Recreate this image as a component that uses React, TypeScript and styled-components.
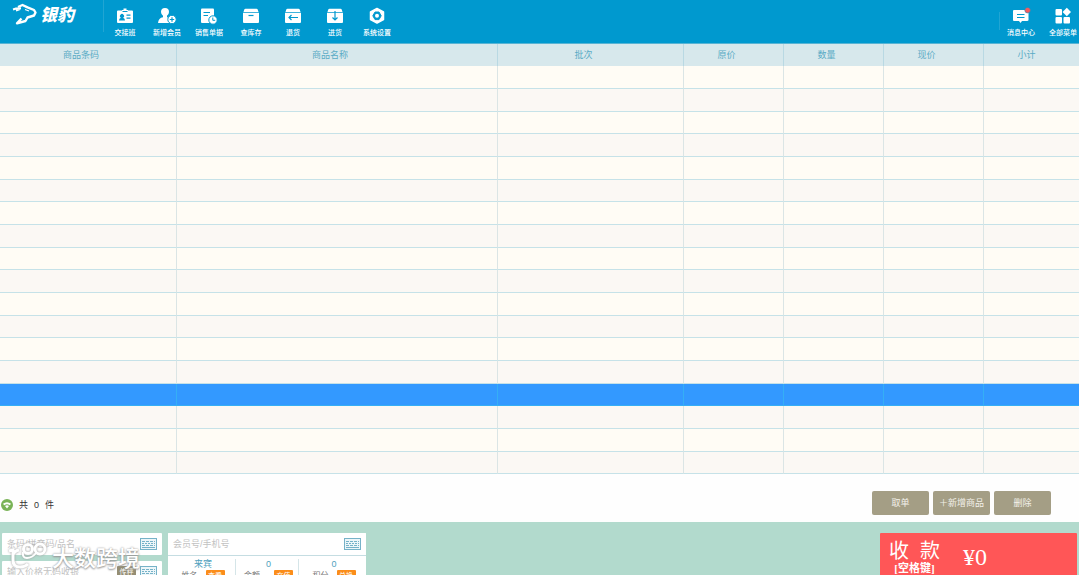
import React from "react";
import styled, { createGlobalStyle, css } from "styled-components";

const GlobalStyle = createGlobalStyle`
  *, *::before, *::after { box-sizing: border-box; }
  body {
    margin: 0;
    background: #fefefe;
    font-family: "Liberation Sans", "Noto Sans CJK SC", sans-serif;
    font-size: 9px;
  }
  button, input { font: inherit; }
`;

const Page = styled.div`
  position: relative;
  display: flex;
  flex-direction: column;
  height: 100vh;
  overflow: hidden;
`;

/* ---------- top bar ---------- */

const TopBar = styled.header`
  display: flex;
  flex: none;
  align-items: flex-start;
  height: 44px;
  background: #0099cf;
  border-bottom: 1px solid #58b4d4;
  color: #fff;
`;

const Brand = styled.a`
  display: flex;
  flex: none;
  gap: 3px;
  width: 103px;
  padding: 3px 0 0 12px;
  color: #fff;
  text-decoration: none;
`;

const BrandName = styled.span`
  font: italic 900 17px/22px "Noto Sans CJK SC", sans-serif;
`;

const Divider = styled.span`
  flex: none;
  width: 1px;
  height: 32px;
  background: #21a5d3;
`;

const Tools = styled.nav<{ $end?: boolean }>`
  display: flex;
  ${(p) =>
    p.$end &&
    css`
      margin-left: auto;
      margin-right: -5px;
    `}
`;

const Tool = styled.button`
  display: flex;
  flex: none;
  flex-direction: column;
  align-items: center;
  gap: 2px;
  width: 42px;
  padding: 7px 0 0;
  border: 0;
  background: none;
  color: #fff;
  font: 500 7px/10px "Noto Sans CJK SC", sans-serif;
  white-space: nowrap;
`;

const EndDivider = styled(Divider)`
  height: 18px;
  margin-top: 12px;
`;

const blue = "#0099cf";

const ShiftIcon = () => (
  <svg width="18" height="18" viewBox="0 0 18 18">
    <path fill="#fff" d="M2 3.500h4V3h1.500V1.500h3V3H12v.5h4q1 0 1 1V15q0 1-1 1H2q-1 0-1-1V4.500q0-1 1-1z" />
    <path fill={blue} d="M6.500 4h5v1h-5zM10.500 7.500h4v1.200h-4zM10.500 10.500h4v1.200h-4zM3 13.500q0-2.200 2-2.700a2 2 0 1 1 2 0q2 .5 2 2.700z" />
  </svg>
);

const MemberIcon = () => (
  <svg width="20" height="18" viewBox="0 0 20 18">
    <path fill="#fff" d="M8 1a4 4 0 0 1 4 4q0 2.300-2 3.800v1.500q4 .7 5 5.700H1q.5-5 5-5.700V8.800Q4 7.300 4 5a4 4 0 0 1 4-4z" />
    <circle cx="15" cy="12.500" r="4.200" fill="#fff" stroke={blue} />
    <path stroke={blue} strokeWidth="1.200" d="M12.800 12.500h4.400M15 10.300v4.400" />
  </svg>
);

const BillIcon = () => (
  <svg width="18" height="18" viewBox="0 0 18 18">
    <path fill="#fff" d="M2 1.500h11q1 0 1 1V16H2q-1 0-1-1V2.500q0-1 1-1z" />
    <path stroke={blue} d="M3.500 5.500h6.500M3.500 8.500h4.500" />
    <circle cx="13" cy="13" r="4.200" fill="#fff" stroke={blue} />
    <path fill="none" stroke={blue} d="M12.800 10.500v2.800h2.400" />
  </svg>
);

const BoxIcon = ({ kind }: { kind: "stock" | "back" | "in" }) => (
  <svg width="18" height="18" viewBox="0 0 18 18">
    <path fill="#fff" d="M3.500 1.800h11q1 0 1.300 1L16.500 5h-15L2.200 2.800q.3-1 1.300-1zM1 5.700h16V15q0 1-1 1H2q-1 0-1-1z" />
    <path
      fill="none"
      stroke={blue}
      strokeWidth="1.200"
      d={
        kind === "stock"
          ? "M6.500 8.500h5"
          : kind === "back"
            ? "M14 10.500H5M7.500 8L5 10.500L7.500 13"
            : "M9 4v9M6.500 10.500L9 13l2.500-2.500"
      }
    />
  </svg>
);

const SettingsIcon = () => (
  <svg width="18" height="18" viewBox="0 0 18 18">
    <path fill="#fff" stroke="#fff" strokeWidth="1.500" strokeLinejoin="round" d="M9 1.500l6.500 3.500v7.600L9 16.100l-6.500-3.500V5z" />
    <path fill={blue} stroke={blue} strokeLinejoin="round" d="M7 5h4l2.200 3.800L11 12.600H7L4.800 8.800z" />
    <circle cx="9" cy="8.800" r="2" fill="#fff" />
  </svg>
);

const MessageIcon = () => (
  <svg width="20" height="18" viewBox="0 0 20 18">
    <path fill="#fff" d="M3 3h13q1.500 0 1.500 1.500v8.500q0 1-1.500 1h-5L9.500 16L8 14H3q-1 0-1-1V4q0-1 1-1z" />
    <path stroke={blue} d="M6 7.500h7.500M6 10.500h7.500" />
    <circle cx="16.600" cy="3.200" r="2.800" fill="#f45b5f" stroke={blue} strokeWidth=".5" />
  </svg>
);

const MenuIcon = () => (
  <svg width="18" height="18" viewBox="0 0 18 18" fill="#fff">
    <rect x="1.500" y="2" width="6.500" height="6.500" rx="1" />
    <rect x="1.500" y="10" width="6.500" height="6.500" rx="1" />
    <rect x="9.500" y="10" width="6.500" height="6.500" rx="1" />
    <path d="M12.800 .8L17 5l-4.200 4.200L8.600 5z" />
  </svg>
);

/* ---------- goods table ---------- */

const Goods = styled.table`
  flex: none;
  width: 100%;
  border-collapse: separate;
  border-spacing: 0;
  table-layout: fixed;
`;

const HeadCell = styled.th<{ $width?: number }>`
  width: ${(p) => (p.$width ? `${p.$width}px` : "auto")};
  height: 22px;
  padding: 0 14px 0 0;
  background: #d7e8ec;
  border-right: 1px solid #b9d9e3;
  color: #59abc5;
  font-weight: 400;
  line-height: 12px;

  &:last-child {
    padding-right: 10px;
    border-right: 0;
  }
`;

const Cell = styled.td`
  padding: 0;
  border-right: 1px solid #dbe5e5;
  border-bottom: 1px solid #c6e2e8;

  &:last-child {
    border-right: 0;
  }
`;

const Row = styled.tr<{ $selected?: boolean }>`
  height: 23px;
  background: #fffcf5;

  &:nth-child(even) {
    background: #fbf8f4;
  }

  &:nth-child(3n + 3) {
    height: 22px;
  }

  ${(p) =>
    p.$selected &&
    css`
      &:nth-child(n) {
        background: #3399ff;
      }
      ${Cell} {
        border-color: #35aff5;
      }
    `}
`;

/* ---------- summary strip ---------- */

const Summary = styled.section`
  display: flex;
  flex: none;
  align-items: center;
  height: 48px;
  padding: 10px 28px 0 1px;
`;

const Count = styled.p`
  display: flex;
  align-items: center;
  gap: 6px;
  margin: 0;
  padding-top: 4px;
  color: #333;
  line-height: 14px;
`;

const Actions = styled.div`
  display: flex;
  gap: 4px;
  margin-left: auto;
`;

const Action = styled.button`
  width: 57px;
  height: 24px;
  padding: 0;
  border: 0;
  border-radius: 2px;
  background: #a49e85;
  color: #f3f1ea;
  line-height: 12px;
  white-space: nowrap;
`;

/* ---------- checkout ---------- */

const Checkout = styled.main`
  display: flex;
  flex: 1 0 auto;
  align-items: flex-start;
  gap: 6px;
  height: 160px;
  padding: 11px 2px 0;
  background: #b2dacd;
`;

const Entry = styled.div`
  display: flex;
  flex: none;
  flex-direction: column;
  gap: 6px;
  width: 160px;
`;

const Field = styled.label`
  display: flex;
  align-items: center;
  gap: 4px;
  height: 22px;
  padding: 0 5px;
  border-radius: 1px;
  background: #fff;
`;

const Input = styled.input`
  flex: 1;
  min-width: 0;
  height: 20px;
  padding: 0;
  border: 0;
  outline: 0;
  background: none;
  color: #555;

  &::placeholder {
    color: #c2c2c2;
    opacity: 1;
  }
`;

const SmallButton = styled.button<{ $accent?: boolean }>`
  flex: none;
  width: 19px;
  height: 12px;
  padding: 0;
  border: 0;
  border-radius: 1px;
  background: ${(p) => (p.$accent ? "#fb8d1a" : "#958e74")};
  color: #fff;
  font-size: 7px;
  line-height: 12px;
`;

const Member = styled.section`
  flex: none;
  width: 198px;
  border-radius: 1px;
  background: #fff;
`;

const Facts = styled.div`
  display: grid;
  grid-template-columns: 67px 63px 1fr;
  border-top: 1px solid #c5dde2;
`;

const Fact = styled.div`
  height: 50px;
  margin-top: 3px;
  padding-left: 3px;
  border-left: 1px solid #d5e5e8;
  text-align: center;
  line-height: 11px;

  &:first-child {
    border-left: 0;
  }
`;

const FactValue = styled.div`
  color: #4f9fbd;
`;

const FactLabel = styled.div<{ $wide?: boolean }>`
  display: flex;
  justify-content: center;
  gap: ${(p) => (p.$wide ? 14 : 8)}px;
  color: #777;
  font-size: 8px;
`;

const Pay = styled.button`
  display: flex;
  align-items: flex-start;
  gap: 23px;
  width: 197px;
  height: 100px;
  margin-left: auto;
  padding: 7px 9px 0;
  border: 0;
  border-radius: 1px;
  background: #ff5657;
  color: #fff;
  font-family: "Liberation Serif", "Noto Sans CJK SC", serif;
`;

const PayText = styled.span`
  display: flex;
  flex-direction: column;
  align-items: center;
  font-size: 20px;
  line-height: 23px;
`;

const PayTitle = styled.span`
  display: flex;
  gap: 11px;
`;

const PayKey = styled.span`
  font-weight: 700;
  font-size: 11px;
  line-height: 10px;
`;

const PayAmount = styled.span`
  padding-top: 5px;
  font-size: 24px;
  line-height: 24px;
`;

/* ---------- watermark ---------- */

const Watermark = styled.div`
  position: absolute;
  left: 8px;
  bottom: 5px;
  display: flex;
  align-items: center;
  gap: 4px;
  color: #fff;
  font: 500 22px/28px "Noto Sans CJK SC", sans-serif;
  text-shadow: 0 0 2px #999, 0 1px 2px #999;
  pointer-events: none;

  svg {
    filter: drop-shadow(0 0 1px #999);
  }
`;

const Keyboard = () => (
  <svg width="17" height="12" viewBox="0 0 17 12" fill="none" stroke="#76b2c8">
    <rect x=".5" y=".5" width="16" height="11" fill="#edf6f9" />
    <path strokeDasharray="3 1" d="M2 3.500h13" />
    <path strokeDasharray="2 1" d="M2 5.500h13" />
    <path strokeDasharray="3 1" d="M2 7.500h13" />
    <path d="M2 9.500h13" />
  </svg>
);

const columns: { title: string; width?: number }[] = [
  { title: "商品条码", width: 177 },
  { title: "商品名称" },
  { title: "批次", width: 186 },
  { title: "原价", width: 100 },
  { title: "数量", width: 100 },
  { title: "现价", width: 100 },
  { title: "小计", width: 95 },
];

const tools = [
  { label: "交接班", icon: <ShiftIcon /> },
  { label: "新增会员", icon: <MemberIcon /> },
  { label: "销售单据", icon: <BillIcon /> },
  { label: "查库存", icon: <BoxIcon kind="stock" /> },
  { label: "退货", icon: <BoxIcon kind="back" /> },
  { label: "进货", icon: <BoxIcon kind="in" /> },
  { label: "系统设置", icon: <SettingsIcon /> },
];

const facts = [
  { value: "来宾", label: "姓名", action: "查看" },
  { value: "0", label: "余额", action: "充值", wide: true },
  { value: "0", label: "积分", action: "兑换" },
];

const ROWS = 18;
const SELECTED = 14;

export default function App() {
  return (
    <Page lang="zh-CN">
      <GlobalStyle />
      <TopBar>
        <Brand href="#">
          <svg width="25" height="22" viewBox="0 0 25 22" fill="none" stroke="#fff" strokeLinejoin="round">
            <path strokeWidth="2" d="M1 6.500L4 5.500L9 5.300M4 7.500L8 6" />
            <path strokeWidth="2.400" d="M6 4L10.500 2l5 2.300L22 7l1.500 2.500L22 12.500l-6.500 2L13.500 18L5 20.300L9.500 15.500" />
            <path strokeWidth="1.200" d="M13 6.500l4 1.500" />
          </svg>
          <BrandName>银豹</BrandName>
        </Brand>
        <Divider />
        <Tools>
          {tools.map((t) => (
            <Tool key={t.label} type="button">
              {t.icon}
              {t.label}
            </Tool>
          ))}
        </Tools>
        <Tools $end>
          <EndDivider />
          <Tool type="button">
            <MessageIcon />
            消息中心
          </Tool>
          <Tool type="button">
            <MenuIcon />
            全部菜单
          </Tool>
        </Tools>
      </TopBar>

      <Goods>
        <thead>
          <tr>
            {columns.map((c) => (
              <HeadCell key={c.title} $width={c.width} scope="col">
                {c.title}
              </HeadCell>
            ))}
          </tr>
        </thead>
        <tbody>
          {Array.from({ length: ROWS }, (_, r) => (
            <Row key={r} $selected={r === SELECTED}>
              {columns.map((c) => (
                <Cell key={c.title} />
              ))}
            </Row>
          ))}
        </tbody>
      </Goods>

      <Summary>
        <Count>
          <svg width="12" height="12" viewBox="0 0 12 12">
            <circle cx="6" cy="6" r="6" fill="#79b356" />
            <path fill="#fff" d="M2 4.800q4-3 8 0L8.800 6.200q-2.800-2-5.600 0zM4 7q2-1.300 4 0L6 9.500z" />
          </svg>
          <span>共</span>
          <span>0</span>
          <span>件</span>
        </Count>
        <Actions>
          <Action type="button">取单</Action>
          <Action type="button">＋新增商品</Action>
          <Action type="button">删除</Action>
        </Actions>
      </Summary>

      <Checkout>
        <Entry>
          <Field>
            <Input aria-label="商品" placeholder="条码/拼音码/品名" />
            <Keyboard />
          </Field>
          <Field>
            <Input aria-label="价格" placeholder="输入价格无码收银" />
            <SmallButton type="button">传秤</SmallButton>
            <Keyboard />
          </Field>
        </Entry>
        <Member>
          <Field>
            <Input aria-label="会员" placeholder="会员号/手机号" />
            <Keyboard />
          </Field>
          <Facts>
            {facts.map((f) => (
              <Fact key={f.label}>
                <FactValue>{f.value}</FactValue>
                <FactLabel $wide={f.wide}>
                  {f.label}
                  <SmallButton type="button" $accent>
                    {f.action}
                  </SmallButton>
                </FactLabel>
              </Fact>
            ))}
          </Facts>
        </Member>
        <Pay type="button">
          <PayText>
            <PayTitle>
              <span>收</span>
              <span>款</span>
            </PayTitle>
            <PayKey>[空格键]</PayKey>
          </PayText>
          <PayAmount>¥0</PayAmount>
        </Pay>
      </Checkout>

      <Watermark>
        <svg width="40" height="28" viewBox="0 0 40 28" fill="none" stroke="#fff" strokeWidth="3">
          <path d="M1 9l4-1v10q0 7 7 7 5 0 8-3M5 13q1-4 6-5" />
          <circle cx="20" cy="7" r="4.500" />
          <circle cx="32" cy="7" r="5" />
          <path strokeWidth="2" d="M15 10q-1 6 4 6 5 0 9-5" />
        </svg>
        大数跨境
      </Watermark>
    </Page>
  );
}
